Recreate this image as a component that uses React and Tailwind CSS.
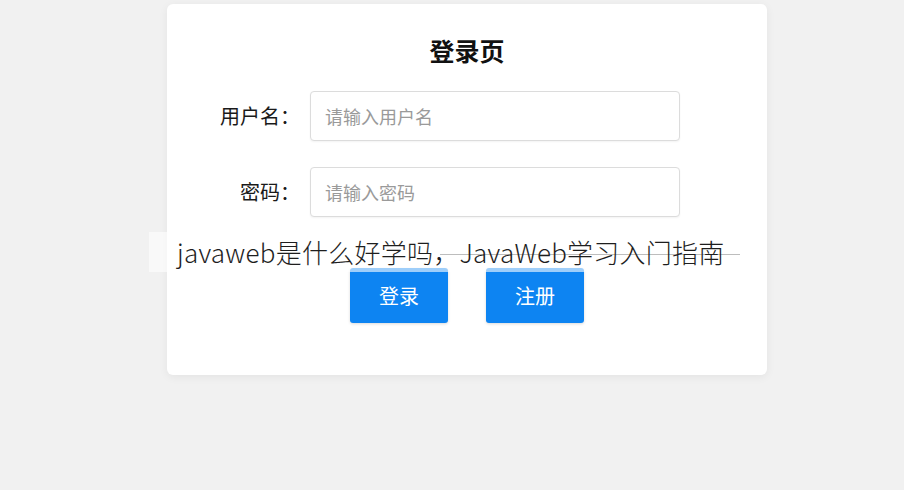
import React from "react";

const cjk = { fontFamily: '"Noto Sans CJK SC", "Noto Sans", sans-serif' };

function Field({ label, placeholder, type = "text" }) {
  return (
    <div className="flex items-center">
      <label className="w-[133px] text-right text-[20px] leading-none text-[#1a1a1a]">
        {label}
      </label>
      <input
        type={type}
        placeholder={placeholder}
        className="ml-[10px] h-[50px] w-[370px] rounded-[4px] border border-[#dcdcdc] bg-white px-[14px] text-[18px] text-[#333] shadow-[0_1px_2px_rgba(0,0,0,0.05)] outline-none placeholder:text-[#9a9a9a]"
        style={cjk}
      />
    </div>
  );
}

export default function App() {
  return (
    <div className="relative h-[490px] w-[904px] overflow-hidden bg-[#f1f1f1] pt-[4px]" style={cjk}>
      <div className="ml-[167px] flex h-[371px] w-[600px] flex-col rounded-[6px] bg-white pt-[30px] shadow-[0_2px_10px_rgba(0,0,0,0.06)]">
        <h1 className="text-center text-[25px] font-bold leading-[32px] text-[#111]">登录页</h1>

        <div className="mt-[25px] flex flex-col gap-[26px]">
          <Field label="用户名：" placeholder="请输入用户名" />
          <Field label="密码：" placeholder="请输入密码" type="password" />
        </div>

        <div className="mt-[51px] flex justify-center gap-[38px]">
          <button className="h-[55px] w-[98px] rounded-[3px] bg-[#0d84f2] text-[20px] text-white shadow-[0_1px_3px_rgba(0,0,0,0.15)]">
            登录
          </button>
          <button className="h-[55px] w-[98px] rounded-[3px] bg-[#0d84f2] text-[20px] text-white shadow-[0_1px_3px_rgba(0,0,0,0.15)]">
            注册
          </button>
        </div>
      </div>

      {/* caption laid over the picture */}
      <div className="absolute left-[149px] top-[232px] h-[40px] w-[592px] bg-white/60" />
      <div className="absolute left-[440px] top-[254px] h-px w-[300px] bg-[#bdbdbd]" />
      <div className="absolute left-[177px] top-[232px] h-[40px] text-[26px] font-light leading-[40px] tracking-[0.25px] text-[#1e1e1e]">
        javaweb是什么好学吗，JavaWeb学习入门指南
      </div>
    </div>
  );
}
